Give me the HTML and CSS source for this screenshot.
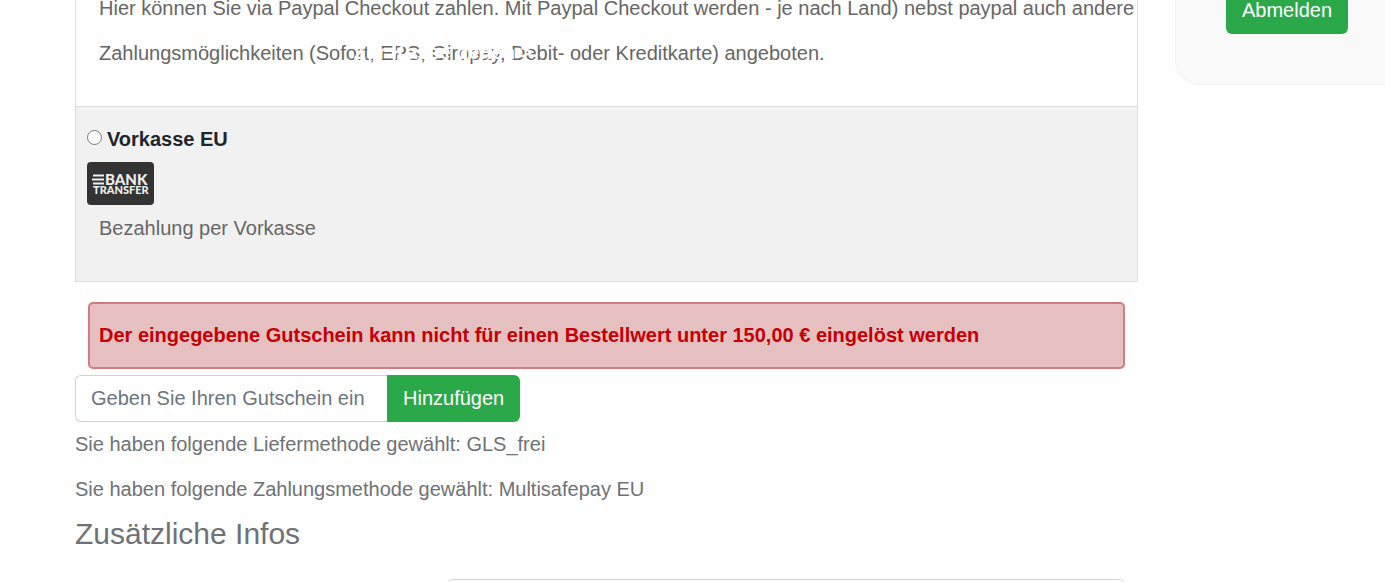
FILE: index.html
```html
<!DOCTYPE html>
<html lang="de">
<head>
    <meta charset="UTF-8">
    <meta name="viewport" content="width=device-width, initial-scale=1">
    <title>Kasse</title>
    <link rel="stylesheet" href="styles.css">
</head>
<body>
    <div class="page">
        <main class="checkout">
            <div class="payments">
                <div class="payment">
                    <p class="payment-text">Hier können Sie via Paypal Checkout zahlen. Mit Paypal Checkout werden - je nach Land) nebst paypal auch andere Zahlungsmöglichkeiten (<span class="overlap">Sofort, EPS, Giropay,<span class="ghost" aria-hidden="true">Zur Kasse gehen &gt;</span></span> Debit- oder Kreditkarte) angeboten.</p>
                </div>
                <div class="payment payment-alt">
                    <div class="payment-head">
                        <input type="radio" id="vorkasse" name="payment">
                        <label for="vorkasse">Vorkasse EU</label>
                    </div>
                    <svg class="bank" viewBox="0 0 67 43" role="img" aria-label="Bank Transfer">
                        <rect width="67" height="43" rx="4" fill="#333"/>
                        <path d="M6 13.500h11M5 17.500h12M6 21.500h11" stroke="#eee" stroke-width="2"/>
                        <text x="18" y="23" font-size="15">BANK</text>
                        <text x="6" y="32" font-size="11">TRANSFER</text>
                    </svg>
                    <p class="payment-text">Bezahlung per Vorkasse</p>
                </div>
            </div>
            <div class="alert" role="alert">Der eingegebene Gutschein kann nicht für einen Bestellwert unter 150,00 € eingelöst werden</div>
            <form class="coupon">
                <input type="text" aria-label="Gutschein" placeholder="Geben Sie Ihren Gutschein ein">
                <button type="button">Hinzufügen</button>
            </form>
            <p>Sie haben folgende Liefermethode gewählt: GLS_frei</p>
            <p>Sie haben folgende Zahlungsmethode gewählt: Multisafepay EU</p>
            <h2>Zusätzliche Infos</h2>
            <div class="info-row">
                <textarea aria-label="Zusätzliche Infos"></textarea>
            </div>
        </main>
        <aside class="account">
            <button type="button">Abmelden</button>
        </aside>
    </div>
</body>
</html>
```
FILE: styles.css
```css
* {
    box-sizing: border-box;
}
html {
    overflow: hidden;
}
body {
    margin: 0;
    background: #fefefe;
    color: #6f7275;
    font-family: "Liberation Sans", Arial, sans-serif;
    font-size: 20px;
    line-height: 45px;
}
p, h2 {
    margin: 0;
}
input, button, textarea {
    font: inherit;
}
button {
    border: 0;
    border-radius: 6px;
    background: #2ba84a;
    color: #fff;
    line-height: 31px;
    padding: 8px 16px;
}

.page {
    display: grid;
    grid-template-columns: 1fr 210px;
    gap: 37px;
    align-items: start;
    padding-left: 75px;
}

/* payment methods */
.payments {
    border: 1px solid #dedede;
    border-top: 0;
}
/* the list is scrolled, its first line is cut off */
.payment:first-child {
    margin-top: -14px;
}
.payment {
    padding-bottom: 30px;
}
.payment-alt {
    border-top: 1px solid #dedede;
    background: #f1f1f1;
    padding: 14px 11px 30px;
}
.payment-text {
    padding-left: 23px;
    color: #666;
}
.payment-alt .payment-text {
    padding-left: 12px;
}
.payment-head {
    display: flex;
    align-items: center;
    gap: 5px;
    line-height: 36px;
    color: #212529;
    font-weight: bold;
}
.payment-head input {
    width: 15px;
    height: 15px;
    margin: 0 0 3px;
}
.bank {
    display: block;
    width: 67px;
    height: 43px;
    margin: 5px 0 1px;
    font-family: Lato, sans-serif;
    font-weight: 900;
    fill: #eee;
}
.overlap {
    position: relative;
}
.ghost {
    position: absolute;
    left: 38px;
    top: 0;
    color: #fefefe;
    line-height: 20px;
    font-weight: bold;
    white-space: nowrap;
}

/* coupon */
.alert {
    margin: 20px 13px 6px;
    padding: 9px;
    border: 2px solid #d57b7f;
    border-radius: 5px;
    background: #e6bfc1;
    color: #c40006;
    font-weight: bold;
}
.coupon {
    display: flex;
}
.coupon input {
    width: 312px;
    padding: 0 15px;
    border: 1px solid #ced4da;
    border-right: 0;
    border-radius: 6px 0 0 6px;
    background: #fff;
}
.coupon input::placeholder {
    color: #6c757d;
    opacity: 1;
}
.coupon button {
    border-radius: 0 6px 6px 0;
}
h2 {
    padding-top: 4px;
    font-size: 30px;
    font-weight: normal;
    line-height: 36px;
}
.info-row {
    display: flex;
    justify-content: flex-end;
    padding: 27px 13px 0 0;
}
.info-row textarea {
    width: 678px;
    max-width: 100%;
    height: 120px;
    border: 1px solid #ced4da;
    border-radius: 6px;
    resize: none;
}

/* sidebar */
.account {
    padding: 0 50px 50px;
    border: solid #f2f2f2;
    border-width: 0 0 1px 1px;
    border-radius: 0 0 0 25px;
    background: #f9f9f9;
    line-height: 0;
}
.account button {
    margin-top: -13px;
}
```
